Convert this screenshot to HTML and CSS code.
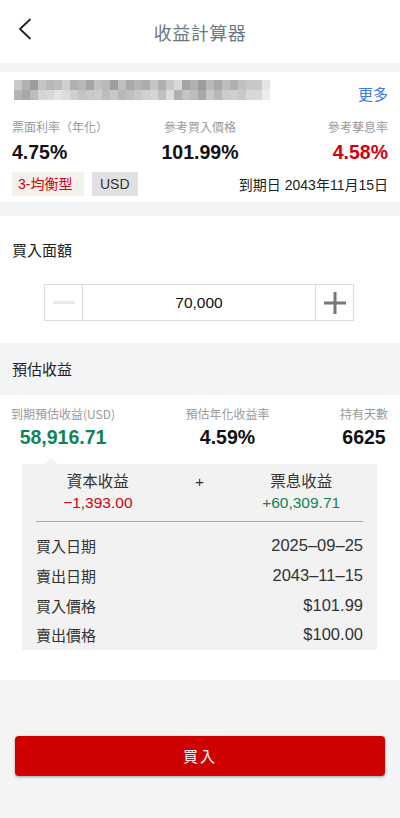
FILE: index.html
```html
<!DOCTYPE html>
<html lang="zh-Hant">
<head>
  <meta charset="UTF-8" />
  <meta name="viewport" content="width=device-width, initial-scale=1.0"/>
  <title>收益計算器</title>
  <link rel="stylesheet" href="styles.css">
</head>
<body>
  <div class="header">
    <svg class="back" width="14" height="22" viewBox="0 0 14 22">
      <polyline points="12,1.5 2,11 12,20.5" fill="none" stroke="#222" stroke-width="1.8" stroke-linecap="round" stroke-linejoin="round"/>
    </svg>
    <div class="title">收益計算器</div>
  </div>

  <div class="gap"></div>

  <div class="bond-card">
    <div class="name-row">
      <svg class="name-blur" width="256" height="20" viewBox="0 0 256 20">
        <g>
          <rect x="0" y="0" width="8" height="10" fill="#c8c8c8"/><rect x="8" y="0" width="8" height="10" fill="#b0b0b0"/>
          <rect x="16" y="0" width="8" height="10" fill="#9c9c9c"/><rect x="24" y="0" width="8" height="10" fill="#c4c4c4"/>
          <rect x="32" y="0" width="8" height="10" fill="#b8b8b8"/><rect x="40" y="0" width="8" height="10" fill="#bcbcbc"/>
          <rect x="48" y="0" width="8" height="10" fill="#d0d0d0"/><rect x="56" y="0" width="8" height="10" fill="#b0b0b0"/>
          <rect x="64" y="0" width="8" height="10" fill="#b8b8b8"/><rect x="72" y="0" width="8" height="10" fill="#a4a4a4"/>
          <rect x="80" y="0" width="8" height="10" fill="#c0c0c0"/><rect x="88" y="0" width="8" height="10" fill="#b8b8b8"/>
          <rect x="96" y="0" width="8" height="10" fill="#9e9e9e"/><rect x="104" y="0" width="8" height="10" fill="#c0c0c0"/>
          <rect x="112" y="0" width="8" height="10" fill="#a8a8a8"/><rect x="120" y="0" width="8" height="10" fill="#b4b4b4"/>
          <rect x="128" y="0" width="8" height="10" fill="#acacac"/><rect x="136" y="0" width="8" height="10" fill="#c4c4c4"/>
          <rect x="144" y="0" width="8" height="10" fill="#b0b0b0"/><rect x="152" y="0" width="8" height="10" fill="#c8c8c8"/>
          <rect x="160" y="0" width="8" height="10" fill="#d8d8d8"/><rect x="168" y="0" width="8" height="10" fill="#a4a4a4"/>
          <rect x="176" y="0" width="8" height="10" fill="#b0b0b0"/><rect x="184" y="0" width="8" height="10" fill="#9c9c9c"/>
          <rect x="192" y="0" width="8" height="10" fill="#b8b8b8"/><rect x="200" y="0" width="8" height="10" fill="#a8a8a8"/>
          <rect x="208" y="0" width="8" height="10" fill="#bcbcbc"/><rect x="216" y="0" width="8" height="10" fill="#b0b0b0"/>
          <rect x="224" y="0" width="8" height="10" fill="#c0c0c0"/><rect x="232" y="0" width="8" height="10" fill="#c8c8c8"/>
          <rect x="240" y="0" width="8" height="10" fill="#c8c8c8"/><rect x="248" y="0" width="8" height="10" fill="#e4e4e4"/>
        </g>
        <g>
          <rect x="0" y="10" width="8" height="10" fill="#b4b4b4"/><rect x="8" y="10" width="8" height="10" fill="#a8a8a8"/>
          <rect x="16" y="10" width="8" height="10" fill="#bcbcbc"/><rect x="24" y="10" width="8" height="10" fill="#d4d4d4"/>
          <rect x="32" y="10" width="8" height="10" fill="#d8d8d8"/><rect x="40" y="10" width="8" height="10" fill="#e4e4e4"/>
          <rect x="48" y="10" width="8" height="10" fill="#dcdcdc"/><rect x="56" y="10" width="8" height="10" fill="#d0d0d0"/>
          <rect x="64" y="10" width="8" height="10" fill="#c4c4c4"/><rect x="72" y="10" width="8" height="10" fill="#c8c8c8"/>
          <rect x="80" y="10" width="8" height="10" fill="#cccccc"/><rect x="88" y="10" width="8" height="10" fill="#bcbcbc"/>
          <rect x="96" y="10" width="8" height="10" fill="#c8c8c8"/><rect x="104" y="10" width="8" height="10" fill="#b8b8b8"/>
          <rect x="112" y="10" width="8" height="10" fill="#c0c0c0"/><rect x="120" y="10" width="8" height="10" fill="#c8c8c8"/>
          <rect x="128" y="10" width="8" height="10" fill="#d0d0d0"/><rect x="136" y="10" width="8" height="10" fill="#d4d4d4"/>
          <rect x="144" y="10" width="8" height="10" fill="#c0c0c0"/><rect x="152" y="10" width="8" height="10" fill="#dcdcdc"/>
          <rect x="160" y="10" width="8" height="10" fill="#b0b0b0"/><rect x="168" y="10" width="8" height="10" fill="#c4c4c4"/>
          <rect x="176" y="10" width="8" height="10" fill="#bcbcbc"/><rect x="184" y="10" width="8" height="10" fill="#a8a8a8"/>
          <rect x="192" y="10" width="8" height="10" fill="#c8c8c8"/><rect x="200" y="10" width="8" height="10" fill="#b8b8b8"/>
          <rect x="208" y="10" width="8" height="10" fill="#cccccc"/><rect x="216" y="10" width="8" height="10" fill="#d0d0d0"/>
          <rect x="224" y="10" width="8" height="10" fill="#c8c8c8"/><rect x="232" y="10" width="8" height="10" fill="#d8d8d8"/>
          <rect x="240" y="10" width="8" height="10" fill="#d8d8d8"/><rect x="248" y="10" width="8" height="10" fill="#ececec"/>
        </g>
      </svg>
      <a class="more">更多</a>
    </div>

    <div class="stats">
      <div class="stat left">
        <div class="stat-label">票面利率（年化）</div>
        <div class="stat-value">4.75%</div>
      </div>
      <div class="stat center">
        <div class="stat-label">參考買入價格</div>
        <div class="stat-value">101.99%</div>
      </div>
      <div class="stat right">
        <div class="stat-label">參考孳息率</div>
        <div class="stat-value red">4.58%</div>
      </div>
    </div>

    <div class="tag-row">
      <span class="tag tag-risk">3-均衡型</span>
      <span class="tag tag-ccy">USD</span>
      <span class="maturity">到期日 2043年11月15日</span>
    </div>
  </div>

  <div class="gap gap-lg"></div>

  <div class="amount-section">
    <div class="section-title">買入面額</div>
    <div class="stepper">
      <div class="step-btn minus"><span class="minus-bar"></span></div>
      <div class="step-value">70,000</div>
      <div class="step-btn plus">
        <svg width="22" height="22" viewBox="0 0 22 22">
          <rect x="0" y="9.5" width="22" height="3" fill="#777"/>
          <rect x="9.5" y="0" width="3" height="22" fill="#777"/>
        </svg>
      </div>
    </div>
  </div>

  <div class="result-head">預估收益</div>

  <div class="result-section">
    <div class="result-stats">
      <div class="r-stat">
        <div class="stat-label">到期預估收益(USD)</div>
        <div class="r-value green">58,916.71</div>
      </div>
      <div class="r-stat">
        <div class="stat-label">預估年化收益率</div>
        <div class="r-value">4.59%</div>
      </div>
      <div class="r-stat">
        <div class="stat-label">持有天數</div>
        <div class="r-value">6625</div>
      </div>
    </div>

    <div class="detail-box">
      <div class="pointer"></div>
      <div class="breakdown">
        <div class="bd-col">
          <div>資本收益</div>
          <div class="red">−1,393.00</div>
        </div>
        <div class="bd-col">
          <div>+</div>
        </div>
        <div class="bd-col">
          <div>票息收益</div>
          <div class="green">+60,309.71</div>
        </div>
      </div>
      <div class="divider"></div>
      <div class="detail-row"><span>買入日期</span><span class="num">2025–09–25</span></div>
      <div class="detail-row"><span>賣出日期</span><span class="num">2043–11–15</span></div>
      <div class="detail-row"><span>買入價格</span><span class="num">$101.99</span></div>
      <div class="detail-row"><span>賣出價格</span><span class="num">$100.00</span></div>
    </div>
  </div>

  <div class="footer">
    <button class="buy-button">買入</button>
  </div>
</body>
</html>
```

FILE: styles.css
```css
html, body {
  margin: 0;
  padding: 0;
}

body {
  background: #f3f4f6;
  font-family: "Liberation Sans", "Noto Sans CJK TC", sans-serif;
  color: #222;
  min-height: 818px;
}

.header {
  height: 63px;
  background: #fff;
  display: flex;
  align-items: center;
  justify-content: center;
  position: relative;
}

.back {
  position: absolute;
  left: 18px;
  top: 18px;
}

.title {
  font-family: "Noto Sans CJK TC", sans-serif;
  font-size: 18px;
  color: #6b7783;
  letter-spacing: 0.5px;
}

.gap {
  height: 9px;
}

.gap-lg {
  height: 14px;
}

.bond-card {
  background: #fff;
  padding: 8px 12px 6px;
}

.name-row {
  display: flex;
  justify-content: space-between;
  align-items: flex-end;
  padding-left: 2px;
}

.name-blur {
  display: block;
}

.more {
  color: #3a7be0;
  font-family: "Noto Sans CJK TC", sans-serif;
  font-size: 15px;
  line-height: 16px;
  margin-bottom: -2px;
}

.stats {
  display: grid;
  grid-template-columns: 1fr 1fr 1fr;
  margin-top: 18px;
}

.stat.left { text-align: left; }
.stat.center { text-align: center; }
.stat.right { text-align: right; }

.stat-label {
  font-family: "Noto Sans CJK TC", sans-serif;
  font-size: 12px;
  line-height: 17px;
  color: #999;
}

.stat-value {
  font-size: 19.5px;
  font-weight: bold;
  line-height: 24px;
  margin-top: 5px;
  color: #111;
}

.red { color: #d3000f; }
.stat-value.red { color: #d3000f; }
.green { color: #108454; }

.tag-row {
  display: flex;
  align-items: center;
  gap: 8px;
  margin-top: 8px;
}

.tag {
  height: 24px;
  line-height: 24px;
  font-size: 14px;
  padding: 0 6px;
}

.tag-risk {
  background: #f5f0ea;
  color: #d3000f;
  width: 60px;
}

.tag-ccy {
  background: #e0e0e0;
  color: #333;
  padding: 0 8px;
}

.maturity {
  margin-left: auto;
  font-size: 14px;
  color: #222;
}

.amount-section {
  background: #fff;
  padding: 23px 0 22px;
}

.section-title {
  font-family: "Noto Sans CJK TC", sans-serif;
  font-size: 15px;
  line-height: 22px;
  padding-left: 12px;
  color: #222;
}

.stepper {
  display: flex;
  width: 310px;
  height: 37px;
  margin: 23px auto 0;
  border: 1px solid #dcdcdc;
  box-sizing: border-box;
  position: relative;
  left: -1px;
}

.step-btn {
  width: 37px;
  display: flex;
  align-items: center;
  justify-content: center;
}

.minus {
  border-right: 1px solid #dcdcdc;
}

.plus {
  border-left: 1px solid #dcdcdc;
}

.minus-bar {
  display: block;
  width: 22px;
  height: 3px;
  background: #e8e8e8;
}

.step-value {
  flex: 1;
  display: flex;
  align-items: center;
  justify-content: center;
  font-size: 15.5px;
  color: #111;
}

.result-head {
  height: 52px;
  line-height: 52px;
  padding-left: 12px;
  font-family: "Noto Sans CJK TC", sans-serif;
  font-size: 15px;
  color: #222;
}

.result-section {
  background: #fff;
  padding: 10px 0 30px;
}

.result-stats {
  display: flex;
  justify-content: space-between;
  padding: 0 12px 0 11px;
}

.r-stat {
  text-align: center;
}

.r-value {
  font-size: 19.5px;
  font-weight: bold;
  line-height: 24px;
  margin-top: 3px;
  color: #111;
}

.r-value.green { color: #108454; }

.detail-box {
  position: relative;
  margin: 15px 23px 0 22px;
  background: #f2f2f2;
  padding: 7px 14px 0;
}

.pointer {
  position: absolute;
  top: -6px;
  left: 22px;
  width: 0;
  height: 0;
  border-left: 7px solid transparent;
  border-right: 7px solid transparent;
  border-bottom: 6px solid #f2f2f2;
}

.breakdown {
  display: grid;
  grid-template-columns: 1fr 1fr 1fr;
  margin: 0 11px;
  text-align: center;
  font-size: 15.5px;
  line-height: 21px;
  color: #333;
}

.breakdown .red { color: #d3000f; }
.breakdown .green { color: #108454; }

.divider {
  height: 1px;
  background: #aaa;
  margin-top: 8px;
  margin-bottom: 9px;
}

.detail-row {
  display: flex;
  justify-content: space-between;
  align-items: center;
  height: 29.7px;
  font-size: 15px;
  color: #333;
}

.detail-row .num {
  font-size: 16.5px;
}

.footer {
  padding: 56px 15px 40px 15px;
}

.buy-button {
  display: block;
  width: 370px;
  height: 40px;
  border: none;
  border-radius: 4px;
  background: #cf0000;
  color: #fff;
  font-family: "Noto Sans CJK TC", sans-serif;
  font-size: 15px;
  letter-spacing: 2px;
  box-shadow: 0 1px 3px rgba(0, 0, 0, 0.35);
}
```
